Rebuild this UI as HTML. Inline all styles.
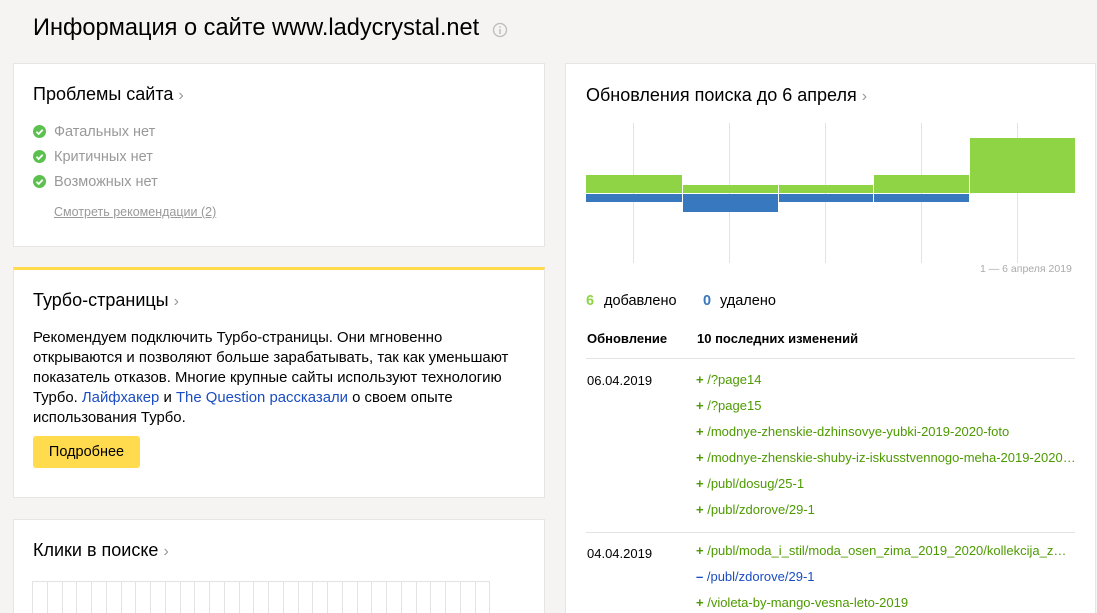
<!DOCTYPE html>
<html style="overflow:hidden;height:613px"><head><meta charset="utf-8"><style>
*{margin:0;padding:0;box-sizing:border-box}
body{width:1097px;height:613px;overflow:hidden;background:#f5f4f2;font-family:"Liberation Sans",Arial,sans-serif;color:#000;position:relative}
.a{position:absolute;white-space:nowrap}
.card{position:absolute;background:#fff;border:1px solid #e6e5e3}
.h{font-size:18px;color:#000}
.ch{color:#999;font-size:16px}
.gl{position:absolute;width:1px;background:#e3e3e3}
.t{font-size:14.9px;line-height:20px;color:#000}
.l{font-size:13px;color:#4d9a00}
</style></head><body>
<div class="a" style="left:33px;top:15px;font-size:23.6px;">Информация о сайте www.ladycrystal.net</div>
<svg class="a" style="left:492px;top:22px" width="16" height="16" viewBox="0 0 16 16"><circle cx="8" cy="8" r="6.5" fill="none" stroke="#bbb" stroke-width="1.3"/><rect x="7.3" y="7" width="1.4" height="5" fill="#bbb"/><rect x="7.3" y="4.3" width="1.4" height="1.5" fill="#bbb"/></svg>

<div class="card" style="left:13px;top:63px;width:532px;height:184px"></div>
<div class="a h" style="left:33px;top:84px">Проблемы сайта <span class="ch">›</span></div>
<div class="a" style="left:33px;top:120px;font-size:14.5px;color:#999;line-height:25px">
<div><span style="display:inline-block;width:13px;height:13px;border-radius:50%;background:#5bc04e;vertical-align:-2px;margin-right:8px;position:relative"><svg style="position:absolute;left:0;top:0" width="13" height="13"><path d="M3.5 6.8l2.2 2.2 4-4.2" fill="none" stroke="#fff" stroke-width="1.8"/></svg></span>Фатальных нет</div>
<div><span style="display:inline-block;width:13px;height:13px;border-radius:50%;background:#5bc04e;vertical-align:-2px;margin-right:8px;position:relative"><svg style="position:absolute;left:0;top:0" width="13" height="13"><path d="M3.5 6.8l2.2 2.2 4-4.2" fill="none" stroke="#fff" stroke-width="1.8"/></svg></span>Критичных нет</div>
<div><span style="display:inline-block;width:13px;height:13px;border-radius:50%;background:#5bc04e;vertical-align:-2px;margin-right:8px;position:relative"><svg style="position:absolute;left:0;top:0" width="13" height="13"><path d="M3.5 6.8l2.2 2.2 4-4.2" fill="none" stroke="#fff" stroke-width="1.8"/></svg></span>Возможных нет</div>
</div>
<div class="a" style="left:54px;top:205px;font-size:12.5px;color:#999;text-decoration:underline">Смотреть рекомендации (2)</div>

<div class="card" style="left:13px;top:267px;width:532px;height:231px;border-top:3px solid #ffdb4d"></div>
<div class="a h" style="left:33px;top:290px">Турбо-страницы <span class="ch">›</span></div>
<div class="a t" style="left:33px;top:328px">Рекомендуем подключить Турбо-страницы. Они мгновенно<br>открываются и позволяют больше зарабатывать, так как уменьшают<br>показатель отказов. Многие крупные сайты используют технологию<br>Турбо. <span style="color:#1a4dc2">Лайфхакер</span> и <span style="color:#1a4dc2">The Question рассказали</span> о своем опыте<br>использования Турбо.</div>
<div class="a" style="left:33px;top:436px;width:107px;height:32px;background:#ffdb4d;border-radius:3px;font-size:14.5px;line-height:32px;text-align:center">Подробнее</div>

<div class="card" style="left:13px;top:519px;width:532px;height:94px;border-bottom:none"></div>
<div class="a h" style="left:33px;top:540px">Клики в поиске <span class="ch">›</span></div>
<svg class="a" style="left:32px;top:581px" width="460" height="32">
<g stroke="#e3e3e3">
<line x1="0" y1="0.5" x2="458" y2="0.5"/>
<path d="M0.5 0V40M15.5 0V40M30.5 0V40M44.5 0V40M59.5 0V40M74.5 0V40M89.5 0V40M103.5 0V40M118.5 0V40M133.5 0V40M148.5 0V40M162.5 0V40M177.5 0V40M192.5 0V40M207.5 0V40M221.5 0V40M236.5 0V40M251.5 0V40M266.5 0V40M280.5 0V40M295.5 0V40M310.5 0V40M325.5 0V40M339.5 0V40M354.5 0V40M369.5 0V40M384.5 0V40M398.5 0V40M413.5 0V40M428.5 0V40M443.5 0V40M457.5 0V40"/>
</g></svg>

<div class="card" style="left:565px;top:63px;width:531px;height:550px;border-bottom:none"></div>
<div class="a h" style="left:586px;top:85px">Обновления поиска до 6 апреля <span class="ch">›</span></div>
<div class="gl" style="left:633px;top:123px;height:140px"></div>
<div class="gl" style="left:729px;top:123px;height:140px"></div>
<div class="gl" style="left:825px;top:123px;height:140px"></div>
<div class="gl" style="left:921px;top:123px;height:140px"></div>
<div class="gl" style="left:1017px;top:123px;height:140px"></div>
<div class="a" style="left:586px;top:175px;width:96px;height:18px;background:#8fd444"></div>
<div class="a" style="left:586px;top:194px;width:96px;height:8px;background:#3878be"></div>
<div class="a" style="left:683px;top:185px;width:95px;height:8px;background:#8fd444"></div>
<div class="a" style="left:683px;top:194px;width:95px;height:18px;background:#3878be"></div>
<div class="a" style="left:779px;top:185px;width:94px;height:8px;background:#8fd444"></div>
<div class="a" style="left:779px;top:194px;width:94px;height:8px;background:#3878be"></div>
<div class="a" style="left:874px;top:175px;width:95px;height:18px;background:#8fd444"></div>
<div class="a" style="left:874px;top:194px;width:95px;height:8px;background:#3878be"></div>
<div class="a" style="left:970px;top:138px;width:105px;height:55px;background:#8fd444"></div>
<div class="a" style="left:980px;top:263px;font-size:10.5px;color:#aaa">1 — 6 апреля 2019</div>
<div class="a" style="left:586px;top:293px;font-size:14.5px"><b style="color:#8fd444">6</b><span style="position:absolute;left:18px">добавлено</span><b style="color:#3878be;position:absolute;left:117px">0</b><span style="position:absolute;left:134px">удалено</span></div>
<div class="a" style="left:587px;top:331px;font-size:13px;font-weight:bold">Обновление</div>
<div class="a" style="left:697px;top:331px;font-size:13px;font-weight:bold">10 последних изменений</div>
<div class="a" style="left:586px;top:358px;width:489px;height:1px;background:#e3e3e3"></div>
<div class="a" style="left:587px;top:373px;font-size:13px">06.04.2019</div>
<div class="a l" style="left:696px;top:367px;line-height:26px">
<div><b>+</b> /?page14</div><div><b>+</b> /?page15</div><div><b>+</b> /modnye-zhenskie-dzhinsovye-yubki-2019-2020-foto</div><div><b>+</b> /modnye-zhenskie-shuby-iz-iskusstvennogo-meha-2019-2020…</div><div><b>+</b> /publ/dosug/25-1</div><div><b>+</b> /publ/zdorove/29-1</div></div>
<div class="a" style="left:586px;top:532px;width:489px;height:1px;background:#e3e3e3"></div>
<div class="a" style="left:587px;top:546px;font-size:13px">04.04.2019</div>
<div class="a l" style="left:696px;top:540px;line-height:22px">
<div style="height:26px"><b>+</b> /publ/moda_i_stil/moda_osen_zima_2019_2020/kollekcija_z…</div><div style="color:#1a4dc2;height:26px"><b>–</b> /publ/zdorove/29-1</div><div style="height:21px;overflow:hidden"><b>+</b> /violeta-by-mango-vesna-leto-2019</div></div>
</body></html>
